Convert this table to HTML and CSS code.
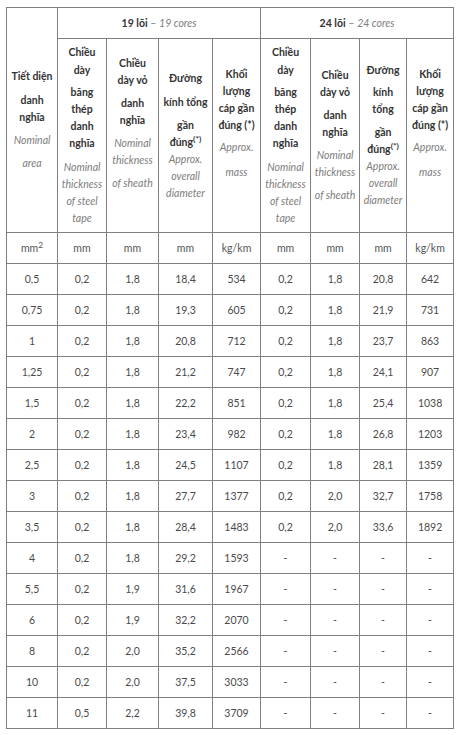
FILE: index.html
```html
<!DOCTYPE html>
<html lang="vi">
<head>
<meta charset="utf-8">
<title>Bảng thông số cáp</title>
<link rel="stylesheet" href="styles.css">
</head>
<body>
<table class="spec">
  <colgroup>
    <col class="c1"><col class="c2"><col class="c3"><col class="c4"><col class="c5">
    <col class="c6"><col class="c7"><col class="c8"><col class="c9">
  </colgroup>
  <thead>
    <tr class="r-group">
      <th rowspan="2" class="hd">
        <span class="ln b">Tiết diện</span>
        <span class="ln b g7">danh</span>
        <span class="ln b">nghĩa</span>
        <span class="ln i g6">Nominal</span>
        <span class="ln i g6">area</span>
      </th>
      <th colspan="4" class="grp"><b class="bk">19 lõi</b> <span class="en">– <i>19 cores</i></span></th>
      <th colspan="4" class="grp"><b class="bk">24 lõi</b> <span class="en">– <i>24 cores</i></span></th>
    </tr>
    <tr class="r-head">
      <th class="hd">
        <span class="ln b">Chiều</span>
        <span class="ln b g1">dày</span>
        <span class="ln b g5">băng</span>
        <span class="ln b">thép</span>
        <span class="ln b">danh</span>
        <span class="ln b">nghĩa</span>
        <span class="ln i g7">Nominal</span>
        <span class="ln i">thickness</span>
        <span class="ln i">of steel</span>
        <span class="ln i">tape</span>
      </th>
      <th class="hd">
        <span class="ln b">Chiều</span>
        <span class="ln b">dày vỏ</span>
        <span class="ln b g6">danh</span>
        <span class="ln b">nghĩa</span>
        <span class="ln i g6">Nominal</span>
        <span class="ln i">thickness</span>
        <span class="ln i g6">of sheath</span>
        <span class="sp"></span>
      </th>
      <th class="hd">
        <span class="ln b">Đường</span>
        <span class="ln b g7">kính tổng</span>
        <span class="ln b g6">gần</span>
        <span class="ln b">đúng<sup>(*)</sup></span>
        <span class="ln i">Approx.</span>
        <span class="ln i">overall</span>
        <span class="ln i">diameter</span>
      </th>
      <th class="hd">
        <span class="ln b">Khối</span>
        <span class="ln b">lượng</span>
        <span class="ln b">cáp gần</span>
        <span class="ln b">đúng (*)</span>
        <span class="ln i g5">Approx.</span>
        <span class="ln i g8">mass</span>
        <span class="sp"></span>
      </th>
      <th class="hd">
        <span class="ln b">Chiều</span>
        <span class="ln b g1">dày</span>
        <span class="ln b g5">băng</span>
        <span class="ln b">thép</span>
        <span class="ln b">danh</span>
        <span class="ln b">nghĩa</span>
        <span class="ln i g7">Nominal</span>
        <span class="ln i">thickness</span>
        <span class="ln i">of steel</span>
        <span class="ln i">tape</span>
      </th>
      <th class="hd">
        <span class="ln b">Chiều</span>
        <span class="ln b">dày vỏ</span>
        <span class="ln b g6">danh</span>
        <span class="ln b">nghĩa</span>
        <span class="ln i g6">Nominal</span>
        <span class="ln i">thickness</span>
        <span class="ln i g6">of sheath</span>
      </th>
      <th class="hd">
        <span class="ln b">Đường</span>
        <span class="ln b g5">kính</span>
        <span class="ln b">tổng</span>
        <span class="ln b g6">gần</span>
        <span class="ln b">đúng<sup>(*)</sup></span>
        <span class="ln i">Approx.</span>
        <span class="ln i">overall</span>
        <span class="ln i">diameter</span>
      </th>
      <th class="hd">
        <span class="ln b">Khối</span>
        <span class="ln b">lượng</span>
        <span class="ln b">cáp gần</span>
        <span class="ln b">đúng (*)</span>
        <span class="ln i g5">Approx.</span>
        <span class="ln i g8">mass</span>
        <span class="sp"></span>
      </th>
    </tr>
  </thead>
  <tbody>
    <tr class="units">
      <td>mm<sup>2</sup></td><td>mm</td><td>mm</td><td>mm</td><td>kg/km</td>
      <td>mm</td><td>mm</td><td>mm</td><td>kg/km</td>
    </tr>
    <tr><td>0,5</td><td>0,2</td><td>1,8</td><td>18,4</td><td>534</td><td>0,2</td><td>1,8</td><td>20,8</td><td>642</td></tr>
    <tr><td>0,75</td><td>0,2</td><td>1,8</td><td>19,3</td><td>605</td><td>0,2</td><td>1,8</td><td>21,9</td><td>731</td></tr>
    <tr><td>1</td><td>0,2</td><td>1,8</td><td>20,8</td><td>712</td><td>0,2</td><td>1,8</td><td>23,7</td><td>863</td></tr>
    <tr><td>1,25</td><td>0,2</td><td>1,8</td><td>21,2</td><td>747</td><td>0,2</td><td>1,8</td><td>24,1</td><td>907</td></tr>
    <tr><td>1,5</td><td>0,2</td><td>1,8</td><td>22,2</td><td>851</td><td>0,2</td><td>1,8</td><td>25,4</td><td>1038</td></tr>
    <tr><td>2</td><td>0,2</td><td>1,8</td><td>23,4</td><td>982</td><td>0,2</td><td>1,8</td><td>26,8</td><td>1203</td></tr>
    <tr><td>2,5</td><td>0,2</td><td>1,8</td><td>24,5</td><td>1107</td><td>0,2</td><td>1,8</td><td>28,1</td><td>1359</td></tr>
    <tr><td>3</td><td>0,2</td><td>1,8</td><td>27,7</td><td>1377</td><td>0,2</td><td>2,0</td><td>32,7</td><td>1758</td></tr>
    <tr><td>3,5</td><td>0,2</td><td>1,8</td><td>28,4</td><td>1483</td><td>0,2</td><td>2,0</td><td>33,6</td><td>1892</td></tr>
    <tr><td>4</td><td>0,2</td><td>1,8</td><td>29,2</td><td>1593</td><td>-</td><td>-</td><td>-</td><td>-</td></tr>
    <tr><td>5,5</td><td>0,2</td><td>1,9</td><td>31,6</td><td>1967</td><td>-</td><td>-</td><td>-</td><td>-</td></tr>
    <tr><td>6</td><td>0,2</td><td>1,9</td><td>32,2</td><td>2070</td><td>-</td><td>-</td><td>-</td><td>-</td></tr>
    <tr><td>8</td><td>0,2</td><td>2,0</td><td>35,2</td><td>2566</td><td>-</td><td>-</td><td>-</td><td>-</td></tr>
    <tr><td>10</td><td>0,2</td><td>2,0</td><td>37,5</td><td>3033</td><td>-</td><td>-</td><td>-</td><td>-</td></tr>
    <tr><td>11</td><td>0,5</td><td>2,2</td><td>39,8</td><td>3709</td><td>-</td><td>-</td><td>-</td><td>-</td></tr>
  </tbody>
</table>
</body>
</html>
```

FILE: styles.css
```css
html, body {
  margin: 0;
  padding: 0;
  background: #ffffff;
}

body {
  padding: 7px 0 0 6px;
  font-family: Lato, "Noto Sans", sans-serif;
  font-size: 10.5px;
  color: #4a4a4a;
}

.spec {
  border-collapse: collapse;
  table-layout: fixed;
  width: 448px;
}

.c1 { width: 51px; }
.c2 { width: 49px; }
.c3 { width: 52px; }
.c4 { width: 54px; }
.c5 { width: 48px; }
.c6 { width: 50px; }
.c7 { width: 49px; }
.c8 { width: 47px; }
.c9 { width: 47px; }

.spec th,
.spec td {
  border: 1px solid #7f7f7f;
  padding: 0 2px;
  text-align: center;
  vertical-align: middle;
}

.r-group { height: 31px; }
.r-head { height: 194px; }
.spec tbody tr { height: 31px; }

.grp {
  font-weight: normal;
  white-space: nowrap;
}

.bk {
  color: #333333;
  font-weight: 700;
}

.en {
  color: #7d7d7d;
}

.hd {
  font-weight: normal;
}

.ln {
  display: block;
  line-height: 17px;
  white-space: nowrap;
}

.ln.b {
  font-weight: 700;
  color: #333333;
}

.ln.i {
  font-style: italic;
  color: #7d7d7d;
}

.g1 { margin-top: 1px; }
.g5 { margin-top: 5px; }
.g6 { margin-top: 6px; }
.g7 { margin-top: 7px; }
.g8 { margin-top: 8px; }

.sp {
  display: block;
  height: 24px;
}

sup {
  font-size: 0.8em;
  line-height: 0;
  vertical-align: 0.5em;
}

.units td {
  color: #555555;
}
```
